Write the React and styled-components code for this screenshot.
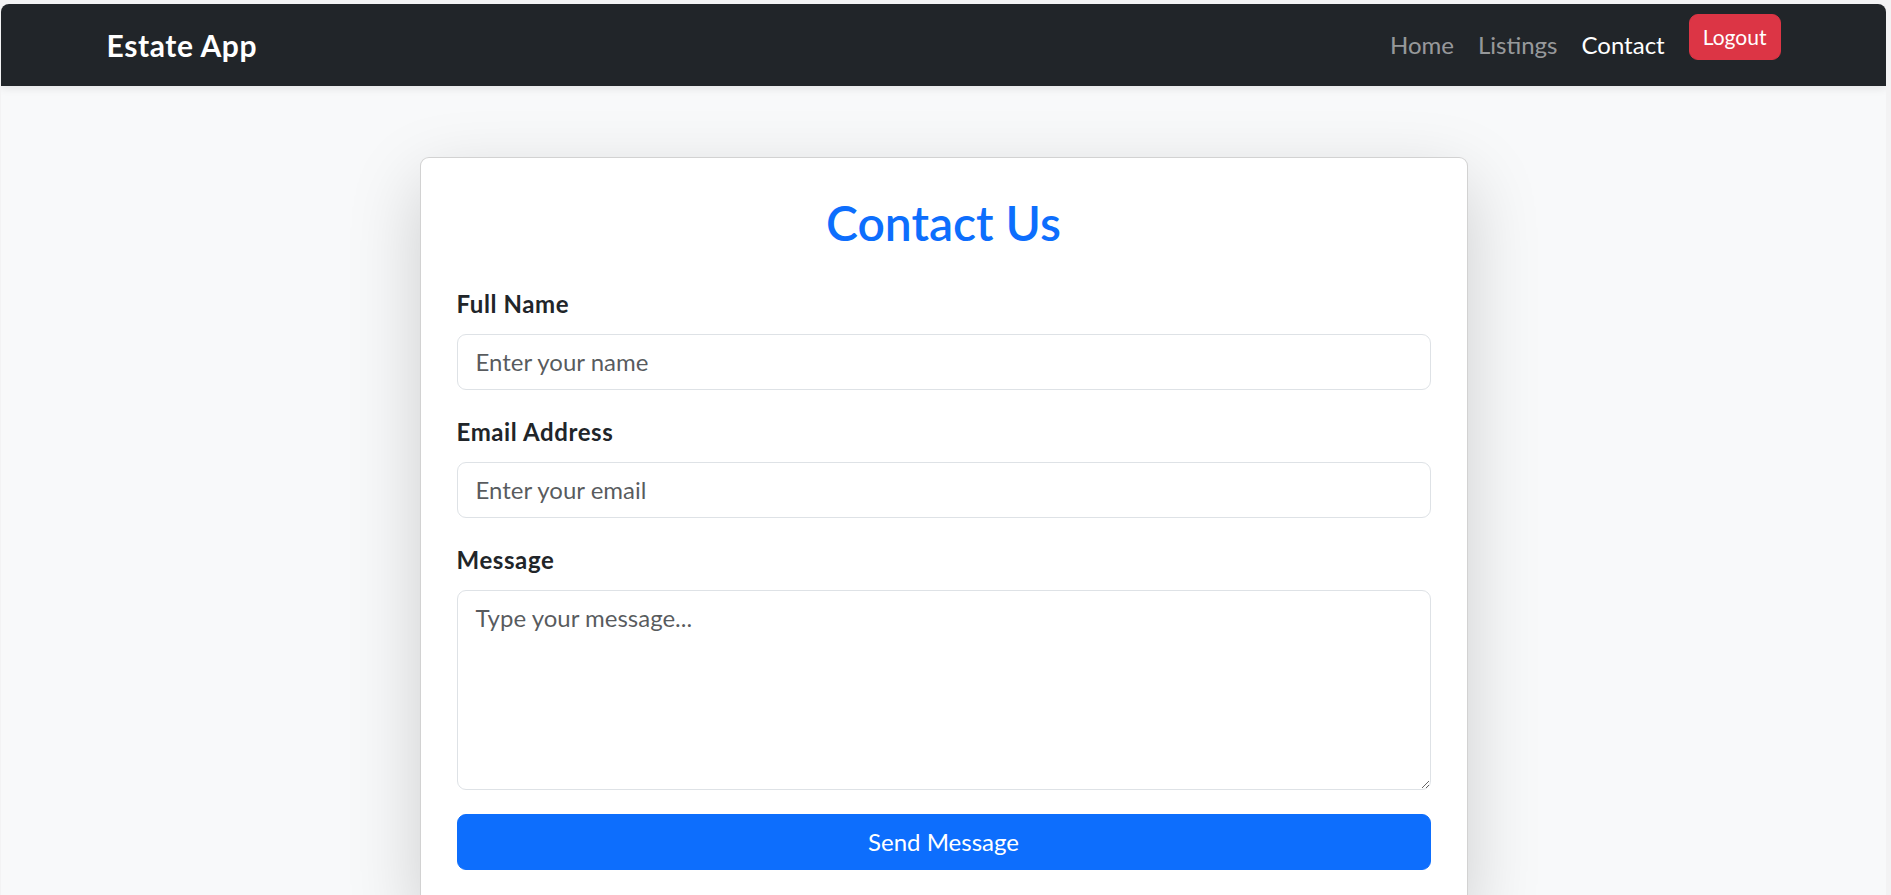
import React from "react";
import styled, { createGlobalStyle } from "styled-components";

const GlobalStyle = createGlobalStyle`
  * {
    box-sizing: border-box;
  }
  body {
    margin: 0;
    background: #f3f3f4;
    font-family: "Segoe UI", Lato, "Noto Sans", sans-serif;
    color: #212529;
  }
`;

const Frame = styled.div`
  margin: 4px 5px 0 1px;
  min-height: 891px;
  background: #f8f9fa;
  border-radius: 8px 8px 0 0;
  overflow: hidden;
`;

const Navbar = styled.nav`
  height: 82px;
  background: #212529;
  box-shadow: 0 3px 8px rgba(0, 0, 0, 0.08);
  position: relative;
  z-index: 1;
`;

const NavContainer = styled.div`
  max-width: 1710px;
  height: 100%;
  margin: 0 auto;
  padding: 0 18px;
  display: flex;
  align-items: center;
  justify-content: space-between;
`;

const Brand = styled.a`
  font-size: 30px;
  font-weight: 700;
  letter-spacing: 0.6px;
  line-height: 45px;
  color: #fff;
  text-decoration: none;
`;

const NavList = styled.ul`
  list-style: none;
  margin: 0;
  padding: 0;
  height: 100%;
  display: flex;
  align-items: center;
`;

const NavItem = styled.li`
  display: flex;
`;

const NavLink = styled.a`
  padding: 0 12px;
  font-size: 24px;
  line-height: 36px;
  text-decoration: none;
  color: ${(p) => (p.$active ? "#fff" : "rgba(255, 255, 255, 0.55)")};
`;

const LogoutButton = styled.button`
  align-self: flex-start;
  margin: 10px 0 0 12px;
  height: 46px;
  padding: 0 13px;
  border: 1px solid #dc3545;
  border-radius: 9px;
  background: #dc3545;
  color: #fff;
  font-family: inherit;
  font-size: 21px;
  line-height: 32px;
`;

const Main = styled.main`
  padding-top: 71px;
`;

const Card = styled.div`
  width: 1048px;
  margin: 0 auto;
  padding: 36px;
  background: #fff;
  border: 1px solid rgba(0, 0, 0, 0.175);
  border-radius: 9px;
  box-shadow: 0 24px 72px rgba(0, 0, 0, 0.175);
`;

const Title = styled.h2`
  margin: 0 0 34px;
  text-align: center;
  font-size: 48px;
  font-weight: 600;
  line-height: 1.2;
  color: #0d6efd;
`;

const Field = styled.div`
  margin-bottom: 24px;
`;

const Label = styled.label`
  display: block;
  margin-bottom: 12px;
  font-size: 24px;
  font-weight: 700;
  letter-spacing: 0.6px;
  line-height: 36px;
  color: #212529;
`;

const Input = styled.input`
  display: block;
  width: 100%;
  height: 56px;
  padding: 9px 18px;
  border: 1px solid #dee2e6;
  border-radius: 9px;
  background: #fff;
  font-family: inherit;
  font-size: 24px;
  line-height: 36px;
  color: #212529;
  &::placeholder {
    color: rgba(33, 37, 41, 0.75);
  }
`;

const TextArea = styled(Input).attrs({ as: "textarea" })`
  height: 200px;
  resize: vertical;
`;

const SubmitButton = styled.button`
  display: block;
  width: 100%;
  height: 56px;
  border: 1px solid #0d6efd;
  border-radius: 9px;
  background: #0d6efd;
  color: #fff;
  font-family: inherit;
  font-size: 24px;
  line-height: 36px;
`;

const links = [
  { label: "Home" },
  { label: "Listings" },
  { label: "Contact", active: true },
];

export default function App() {
  return (
    <>
      <GlobalStyle />
      <Frame>
        <Navbar>
          <NavContainer>
            <Brand href="#">Estate App</Brand>
            <NavList>
              {links.map((l) => (
                <NavItem key={l.label}>
                  <NavLink href="#" $active={l.active}>
                    {l.label}
                  </NavLink>
                </NavItem>
              ))}
              <LogoutButton>Logout</LogoutButton>
            </NavList>
          </NavContainer>
        </Navbar>
        <Main>
          <Card>
            <Title>Contact Us</Title>
            <form onSubmit={(e) => e.preventDefault()}>
              <Field>
                <Label>Full Name</Label>
                <Input type="text" placeholder="Enter your name" />
              </Field>
              <Field>
                <Label>Email Address</Label>
                <Input type="email" placeholder="Enter your email" />
              </Field>
              <Field>
                <Label>Message</Label>
                <TextArea placeholder="Type your message..." />
              </Field>
              <SubmitButton type="submit">Send Message</SubmitButton>
            </form>
          </Card>
        </Main>
      </Frame>
    </>
  );
}
